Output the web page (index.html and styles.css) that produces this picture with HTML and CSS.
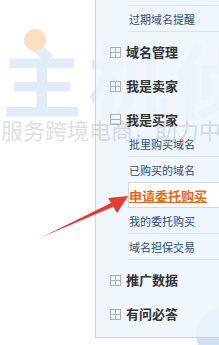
FILE: index.html
```html
<!DOCTYPE html>
<html lang="zh">
<head>
<meta charset="utf-8">
<link rel="stylesheet" href="styles.css">
</head>
<body>
<div class="stage">
  <div class="mark">
    <div class="big">主机侦</div>
    <div class="dot"></div>
    <div class="blob"></div>
  </div>

  <div class="panel">
    <ul class="sub first">
      <li class="item">过期域名提醒</li>
    </ul>
    <div class="head"><span class="ico plus"></span>域名管理</div>
    <div class="head"><span class="ico plus"></span>我是卖家</div>
    <div class="head open"><span class="ico minus"></span>我是买家</div>
    <ul class="sub">
      <li class="item">批里购买域名</li>
      <li class="item">已购买的域名</li>
      <li class="item active"><span>申请委托购买</span></li>
      <li class="item">我的委托购买</li>
      <li class="item">域名担保交易</li>
    </ul>
    <div class="head after"><span class="ico plus"></span>推广数据</div>
    <div class="head"><span class="ico plus"></span>有问必答</div>
  </div>

  <div class="slogan">服务跨境电商，助力中</div>
  <svg class="arrow" width="219" height="345" viewBox="0 0 219 345">
    <path d="M42 237 L113 202 L115 206 Z" fill="#e63a32"/>
    <path d="M128 196 L108 198 L117 213 Z" fill="#e63a32"/>
  </svg>
</div>
</body>
</html>
```
FILE: styles.css
```css
html, body {
  margin: 0;
  padding: 0;
  background: #ffffff;
}
body {
  width: 219px;
  height: 345px;
  overflow: hidden;
  font-family: "Noto Sans CJK SC", "Noto Sans", sans-serif;
}
.stage {
  position: relative;
  width: 219px;
  height: 345px;
  overflow: hidden;
}
.panel {
  position: relative;
  z-index: 1;
  margin-left: 95px;
  width: 140px;
  padding-top: 5px;
  padding-bottom: 6px;
  background: rgba(236, 244, 252, 0.85);
  border-left: 1px solid #c6d7e8;
  border-bottom: 1px solid #c9d2dc;
}
.sub {
  list-style: none;
  margin: 0 0 0 32px;
  padding: 0;
}
.sub.first {
  border-top: 1px solid #d7e3ef;
}
.item {
  height: 25px;
  line-height: 27px;
  padding-left: 1px;
  font-size: 11px;
  color: #2d4d7c;
  border-bottom: 1px solid #d7e3ef;
  white-space: nowrap;
}
.item.active {
  background: #ffffff;
  border: 1px solid #d3d9e0;
  border-right: none;
  height: 24px;
  line-height: 26px;
  margin-top: -1px;
  padding-left: 0;
}
.item.active span {
  font-size: 13px;
  font-weight: 700;
  color: #e8681c;
  text-decoration: underline;
}
.head {
  height: 34px;
  line-height: 34px;
  padding-left: 14px;
  display: flex;
  align-items: center;
  gap: 5px;
  font-size: 13px;
  font-weight: 700;
  color: #333333;
  white-space: nowrap;
}
.sub.first + .head,
.head.after {
  margin-top: 3px;
}
.head.open {
  height: 28px;
  align-items: flex-start;
  padding-top: 3px;
  box-sizing: border-box;
  line-height: 28px;
}
.head.open .ico {
  margin-top: 8px;
}
.ico {
  position: relative;
  width: 11px;
  height: 11px;
  box-sizing: border-box;
  border: 1px solid #a9b2bb;
  flex: none;
}
.ico.plus::before,
.ico.minus::before {
  content: "";
  position: absolute;
  left: 0;
  right: 0;
  top: 4px;
  height: 1px;
  background: #a9b2bb;
}
.ico.plus::after {
  content: "";
  position: absolute;
  top: 0;
  bottom: 0;
  left: 4px;
  width: 1px;
  background: #a9b2bb;
}
.mark {
  position: absolute;
  z-index: 0;
  left: 0;
  top: 0;
  width: 219px;
  height: 345px;
  pointer-events: none;
}
.big {
  position: absolute;
  left: 2px;
  top: 28px;
  font-size: 80px;
  line-height: 96px;
  font-weight: 700;
  letter-spacing: 6px;
  color: #e1ecf8;
  white-space: nowrap;
}
.dot {
  position: absolute;
  left: 24px;
  top: 29px;
  width: 22px;
  height: 22px;
  border-radius: 50%;
  background: #fbdfc2;
}
.blob {
  position: absolute;
  left: 196px;
  top: 308px;
  width: 52px;
  height: 52px;
  border-radius: 50%;
  background: #cfe2f4;
}
.slogan {
  position: absolute;
  z-index: 2;
  left: 1px;
  top: 115px;
  font-size: 22px;
  line-height: 28px;
  color: rgba(170, 170, 170, 0.4);
  white-space: nowrap;
  pointer-events: none;
}
.arrow {
  position: absolute;
  z-index: 3;
  left: 0;
  top: 0;
}
```
